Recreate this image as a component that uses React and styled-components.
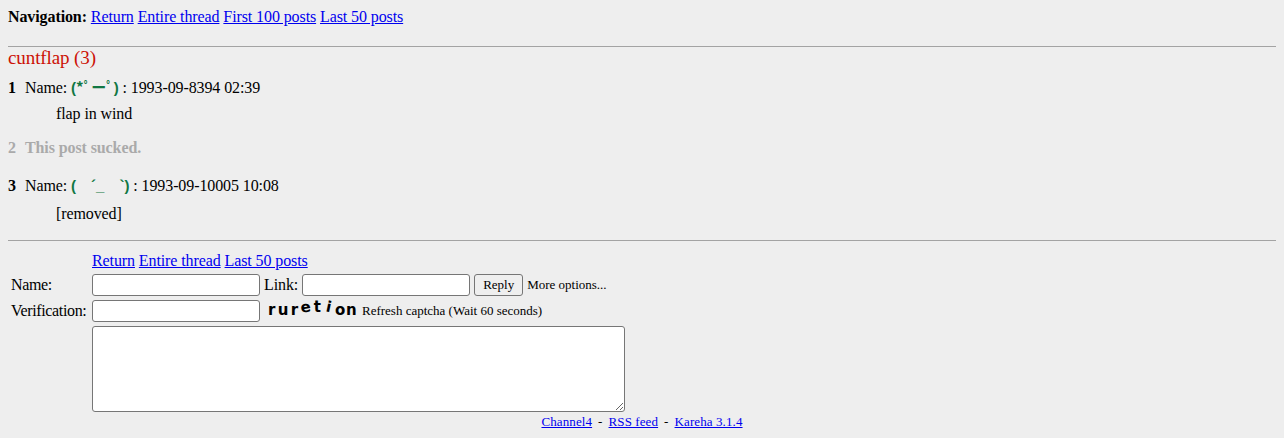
import React from "react";
import styled, { createGlobalStyle } from "styled-components";

const GlobalStyle = createGlobalStyle`
  body {
    margin: 8px;
    background: #eeeeee;
    color: #000000;
    font-family: "Liberation Serif", "Times New Roman", serif;
    font-size: 16px;
    line-height: 18px;
    letter-spacing: -0.1px;
  }
  a {
    color: #0000ee;
    text-decoration: underline;
  }
`;

const Navigation = styled.div`
  height: 18px;
  white-space: nowrap;
  strong {
    font-weight: bold;
  }
`;

const Rule = styled.hr`
  border: 0;
  border-top: 1px solid #a3a3a3;
  height: 0;
  margin: ${(p) => p.$top}px 0 0 0;
`;

const ThreadTitle = styled.h2`
  margin: 0;
  font-size: 19px;
  line-height: 22px;
  font-weight: normal;
  color: #cc1105;
`;

const Reply = styled.div`
  margin-top: ${(p) => p.$top}px;
`;

const ReplyHead = styled.div`
  display: flex;
  align-items: baseline;
  height: 18px;
  white-space: pre;
  color: ${(p) => (p.$deleted ? "#aaaaaa" : "#000000")};
  font-weight: ${(p) => (p.$deleted ? "bold" : "normal")};
`;

const ReplyNum = styled.span`
  font-weight: bold;
  width: 17px;
`;

const PosterName = styled.span`
  color: #117743;
  font-weight: bold;
  font-family: "Liberation Sans", "DejaVu Sans", "Noto Sans CJK JP", sans-serif;
  font-size: 15px;
  letter-spacing: 0;
`;

const ReplyText = styled.div`
  margin-top: ${(p) => p.$top}px;
  padding-left: 48px;
  height: 18px;
`;

const PostForm = styled.div`
  display: grid;
  grid-template-columns: 84px auto;
  row-gap: 4px;
  margin-top: 11px;
`;

const Label = styled.div`
  padding-left: 3px;
  display: flex;
  align-items: center;
  white-space: nowrap;
  letter-spacing: -0.35px;
`;

const Field = styled.div`
  display: flex;
  align-items: center;
  gap: 4px;
  white-space: nowrap;
`;

const Links = styled.div`
  white-space: nowrap;
  height: 18px;
`;

const TextInput = styled.input`
  box-sizing: border-box;
  width: 168px;
  height: 22px;
  margin: 0;
  border: 1px solid #767676;
  border-radius: 3px;
  background: #ffffff;
  padding: 1px 2px;
`;

const Button = styled.button`
  box-sizing: border-box;
  height: 22px;
  width: 49px;
  margin: 0;
  padding: 0;
  border: 1px solid #767676;
  border-radius: 3px;
  background: #efefef;
  font-family: "Liberation Serif", serif;
  font-size: 13px;
  color: #000;
`;

const Small = styled.span`
  font-size: 13px;
  letter-spacing: 0;
`;

const Captcha = styled.span`
  display: inline-flex;
  align-items: flex-end;
  width: 92px;
  height: 22px;
  margin-left: 2px;
  font-family: "DejaVu Sans", sans-serif;
  font-weight: bold;
  font-size: 15px;
  letter-spacing: 0;
`;

const CaptchaChar = styled.span`
  width: 11.4px;
  text-align: center;
  transform: translateY(${(p) => p.$dy}px) rotate(${(p) => p.$rot}deg);
`;

const Comment = styled.textarea`
  box-sizing: border-box;
  width: 533px;
  height: 86px;
  margin: 0;
  border: 1px solid #767676;
  border-radius: 3px;
  background: #ffffff;
`;

const Footer = styled.div`
  display: flex;
  justify-content: center;
  gap: 6px;
  font-size: 13px;
  line-height: 15px;
  margin-top: 2px;
  letter-spacing: 0.1px;
`;

const captcha = [
  ["r", -3, 0],
  ["u", -3, 0],
  ["r", -3, 0],
  ["e", -6, -8],
  ["t", -6, 0],
  ["i", -6, 12],
  ["o", -3, 0],
  ["n", -3, 0],
];

export default function App() {
  return (
    <>
      <GlobalStyle />
      <Navigation>
        <strong>Navigation:</strong> <a href="#">Return</a>{" "}
        <a href="#">Entire thread</a> <a href="#">First 100 posts</a>{" "}
        <a href="#">Last 50 posts</a>
      </Navigation>
      <Rule $top={20} />
      <ThreadTitle>cuntflap (3)</ThreadTitle>

      <Reply $top={10}>
        <ReplyHead>
          <ReplyNum>1</ReplyNum>Name: <PosterName>(*ﾟーﾟ)</PosterName> : 1993-09-8394 02:39
        </ReplyHead>
        <ReplyText $top={8}>flap in wind</ReplyText>
      </Reply>

      <Reply $top={16}>
        <ReplyHead $deleted>
          <ReplyNum>2</ReplyNum>This post sucked.
        </ReplyHead>
      </Reply>

      <Reply $top={20}>
        <ReplyHead>
          <ReplyNum>3</ReplyNum>Name: <PosterName>(　´_　`)</PosterName> : 1993-09-10005 10:08
        </ReplyHead>
        <ReplyText $top={10}>[removed]</ReplyText>
      </Reply>

      <Rule $top={17} />

      <PostForm>
        <div />
        <Links>
          <a href="#">Return</a> <a href="#">Entire thread</a>{" "}
          <a href="#">Last 50 posts</a>
        </Links>

        <Label>Name:</Label>
        <Field>
          <TextInput />
          <span>Link:</span>
          <TextInput />
          <Button>Reply</Button>
          <Small>More options...</Small>
        </Field>

        <Label>Verification:</Label>
        <Field>
          <TextInput />
          <Captcha>
            {captcha.map(([c, dy, rot], i) => (
              <CaptchaChar key={i} $dy={dy} $rot={rot}>
                {c}
              </CaptchaChar>
            ))}
          </Captcha>
          <Small>Refresh captcha (Wait 60 seconds)</Small>
        </Field>

        <div />
        <Field>
          <Comment />
        </Field>
      </PostForm>

      <Footer>
        <a href="#">Channel4</a>
        <span>-</span>
        <a href="#">RSS feed</a>
        <span>-</span>
        <a href="#">Kareha 3.1.4</a>
      </Footer>
    </>
  );
}
